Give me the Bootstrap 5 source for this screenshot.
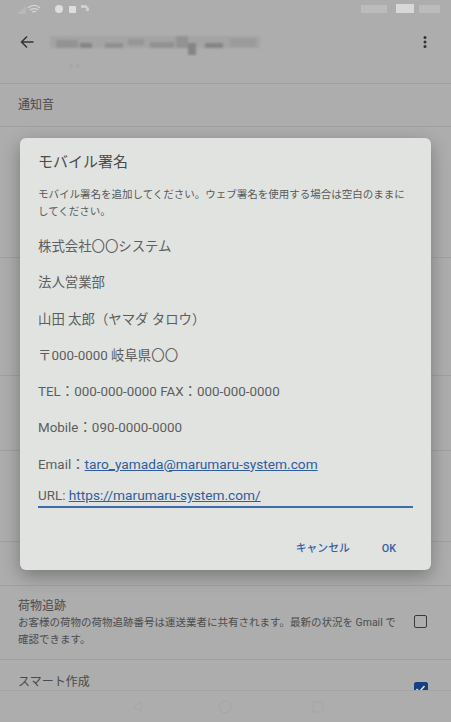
<!DOCTYPE html>
<html lang="ja">
<head>
<meta charset="utf-8">
<link href="https://cdn.jsdelivr.net/npm/bootstrap@5.3.0/dist/css/bootstrap.min.css" rel="stylesheet">
<style>
html,body{height:100%;}
body{width:451px;height:722px;overflow:hidden;background:#adadad;position:relative;font-family:Roboto,"Noto Sans CJK JP",sans-serif;color:#444;}
.status-strip{height:30px;padding:4px 10px 0 16px;}
.soft{filter:blur(.6px);}
.app-strip{height:53px;padding:5px 24px 0 20px;}
.pix{display:block;filter:blur(1px);}
.set-row{border-bottom:1px solid #a0a0a0;padding:0 18px;}
.r1{height:44px;font-size:12px;color:#4a4a4a;border-top:1px solid #a0a0a0;}
.r2{height:131px;}.r3{height:118px;}.r4{height:75px;}.r5{height:91px;}.r6{height:44px;}
.r7{height:74px;padding:1px 24px 0 18px;}
.r8{padding:14px 23px 0 18px;height:60px;}
.tt{font-size:12px;line-height:16px;color:#4a4a4a;}
.ds{font-size:10.5px;line-height:17px;color:#4c4c4c;width:383px;}
.cb{width:13px;height:13px;border:1.5px solid #3a3a3a;border-radius:2px;flex:none;margin-bottom:4px;}
.cb-on{background:#153f85;border-color:#153f85;margin:8px 0 0;width:14px;height:14px;padding:0;}
.cb-on svg{display:block;}
.nav-foot{position:absolute;left:0;right:0;bottom:0;height:32px;background:#adadad;border-top:1px solid #a4a4a4;}
.sig-wrap{position:absolute;left:20px;top:138px;width:411px;height:432px;}
.sig-box{height:100%;background:#e1e3e1;border-radius:6px;box-shadow:0 6px 18px rgba(0,0,0,.3);padding:14px 18px 0;color:#5c5e5d;}
.sig-title{font-size:15px;line-height:20px;color:#4a4b4a;margin:0;font-weight:400;}
.sig-desc{font-size:10.5px;line-height:17px;color:#585a59;margin:14px 0 0;}
.sig-lines{margin-top:17px;font-size:13.4px;line-height:20px;}
.sig-lines>div{margin-bottom:16.3px;white-space:nowrap;}
.sig-lines a{color:#2f5d9e;font-size:13.7px;line-height:1;}
.sig-lines>div.sig-url{margin:-5px 0 0;border-bottom:2px solid #3d6cab;padding-bottom:0;}
.sig-acts{margin-top:33px;padding-right:17px;gap:32px;font-size:10.8px;font-weight:500;}
.sig-acts a{color:#34609f;text-decoration:none;}
</style>
</head>
<body>
<div class="status-strip d-flex justify-content-between soft">
  <svg width="90" height="12" viewBox="0 0 90 12"><path d="M1 10 10 2V10Z" fill="#b8b8b8"/><path d="M12 4c4-3.500 8-3.500 12 0M14 6c3-2 5-2 8 0M16 8c2-1 2-1 4 0" fill="none" stroke="#d6d6d6" stroke-width="1.300"/><circle cx="43" cy="5" r="4" fill="#dedede"/><rect x="53" y="2" width="7" height="7" rx="1" fill="#dedede"/><path d="M65 1h5l3 3v3h-3V4h-5Z" fill="#d0d0d0"/></svg>
  <svg width="80" height="10" viewBox="0 0 80 10"><rect x="0" y="1" width="26" height="8" fill="#bcbcbc"/><rect x="35" y="0" width="18" height="9" fill="#d8d8d8"/><rect x="58" y="1" width="21" height="8" fill="#bcbcbc"/></svg>
</div>
<div class="app-strip d-flex align-items-start justify-content-between">
  <div class="d-flex align-items-start gap-3">
    <svg width="14" height="14" viewBox="0 0 14 14"><path d="M13.500 7H1.500M7 1.500 1.500 7 7 12.500" fill="none" stroke="#333" stroke-width="1.500"/></svg>
    <svg class="pix" width="210" height="36" viewBox="0 0 210 36" shape-rendering="crispEdges"><rect x="0" y="1" width="210" height="12" fill="#a4a4a4"/><rect x="6" y="5" width="22" height="8" fill="#939393"/><rect x="30" y="8" width="12" height="5" fill="#858585"/><rect x="55" y="8" width="18" height="5" fill="#8f8f8f"/><rect x="78" y="4" width="16" height="6" fill="#969696"/><rect x="100" y="7" width="24" height="6" fill="#919191"/><rect x="126" y="1" width="12" height="12" fill="#939393"/><rect x="138" y="8" width="8" height="12" fill="#858585"/><rect x="155" y="8" width="18" height="5" fill="#858585"/><rect x="180" y="3" width="26" height="9" fill="#9b9b9b"/><rect x="20" y="30" width="2" height="2" fill="#9a9a9a"/><rect x="27" y="30" width="2" height="2" fill="#9a9a9a"/></svg>
  </div>
  <svg width="4" height="14" viewBox="0 0 4 14"><circle cx="2" cy="2.500" r="1.500" fill="#333"/><circle cx="2" cy="7" r="1.500" fill="#333"/><circle cx="2" cy="11.500" r="1.500" fill="#333"/></svg>
</div>
<div class="set-row r1 d-flex align-items-center">通知音</div>
<div class="set-row r2"></div>
<div class="set-row r3"></div>
<div class="set-row r4"></div>
<div class="set-row r5"></div>
<div class="set-row r6"></div>
<div class="set-row r7 d-flex justify-content-between align-items-center">
  <div><div class="tt">荷物追跡</div><div class="ds">お客様の荷物の荷物追跡番号は運送業者に共有されます。最新の状況を Gmail で確認できます。</div></div>
  <div class="cb"></div>
</div>
<div class="set-row r8 d-flex justify-content-between border-0">
  <div class="tt">スマート作成</div>
  <div class="cb cb-on"><svg width="11" height="11" viewBox="0 0 11 11"><path d="M1.500 6 4.300 8.800 9.500 3" fill="none" stroke="#e1e3e1" stroke-width="1.500"/></svg></div>
</div>
<div class="nav-foot d-flex justify-content-center align-items-center soft">
  <svg width="198" height="14" viewBox="0 0 198 14"><path d="M14 2 6 7l8 5Z" fill="none" stroke="#a6a6a6"/><circle cx="98" cy="7" r="6" fill="none" stroke="#a6a6a6"/><rect x="186" y="2" width="10" height="10" fill="none" stroke="#a6a6a6"/></svg>
</div>
<div class="sig-wrap">
  <div class="sig-box">
    <h5 class="sig-title">モバイル署名</h5>
    <p class="sig-desc">モバイル署名を追加してください。ウェブ署名を使用する場合は空白のままにしてください。</p>
    <div class="sig-lines">
      <div>株式会社〇〇システム</div>
      <div>法人営業部</div>
      <div>山田 太郎（ヤマダ タロウ）</div>
      <div>〒000-0000 岐阜県〇〇</div>
      <div>TEL：000-000-0000 FAX：000-000-0000</div>
      <div>Mobile：090-0000-0000</div>
      <div>Email：<a href="#">taro_yamada@marumaru-system.com</a></div>
      <div class="sig-url">URL: <a href="#">https://marumaru-system.com/</a></div>
    </div>
    <div class="sig-acts d-flex justify-content-end">
      <a href="#">キャンセル</a><a href="#">OK</a>
    </div>
  </div>
</div>
<script src="https://cdn.jsdelivr.net/npm/bootstrap@5.3.0/dist/js/bootstrap.bundle.min.js"></script>
</body>
</html>
